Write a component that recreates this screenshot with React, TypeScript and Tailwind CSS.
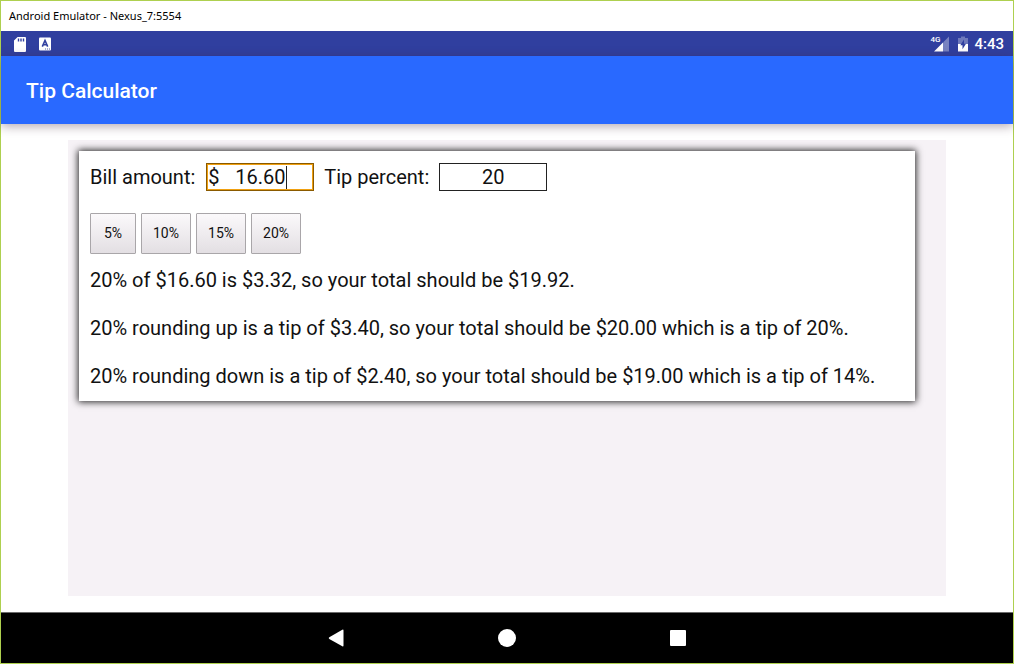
import { useState } from "react";

const TIP_PRESETS = [5, 10, 15, 20];

function StatusBar() {
  return (
    <div className="flex h-[25px] shrink-0 items-center bg-[#303f9f] pr-[9px] pl-[11px] text-white">
      <svg className="h-4 w-4" viewBox="0 0 16 16" fill="currentColor" aria-hidden="true">
        <path
          fillRule="evenodd"
          d="M5.6 1H13q1 0 1 1v13q0 1-1 1H3q-1 0-1-1V4.6zM5.8 2.5v3h1.4v-3zm2.5 0v3h1.4v-3zm2.5 0v3h1.4v-3z"
        />
      </svg>
      <svg className="ml-[10px] h-[14px] w-[14px]" viewBox="0 0 14 14" aria-hidden="true">
        <rect x="1" y="0.5" width="12" height="13" rx="1" fill="white" />
        <path d="M4.3 9.6 7 3.4l2.7 6.2M5.3 7.7h3.4" fill="none" stroke="#303f9f" strokeWidth="1.6" />
        <path d="M7 12h1m1 0h1m1 0h1" stroke="#303f9f" strokeWidth="0.8" />
      </svg>
      <div className="ml-auto flex items-center">
        <div className="relative h-4 w-5">
          <svg className="h-4 w-5" viewBox="0 0 20 16" aria-hidden="true">
            <path d="M19 0.5V15.5h-6V6.5z" fill="white" fillOpacity="0.35" />
            <path d="M13 6.5v9H4z" fill="white" />
          </svg>
          <span className="absolute -top-px left-0 text-[8px] leading-[10px] font-medium">4G</span>
        </div>
        <svg className="ml-[7px] h-4 w-3" viewBox="0 0 12 16" aria-hidden="true">
          <path d="M4 0.5h4V2h3v6H1V2h3z" fill="white" fillOpacity="0.3" />
          <path d="M1 8h10v7.5H1z" fill="white" />
          <path d="M7 3.5 3.3 9.3h2.2v3.9L9 7.7H7z" fill="#303f9f" />
        </svg>
        <span className="ml-[5px] pt-px text-[15px] leading-6 font-medium">4:43</span>
      </div>
    </div>
  );
}

function NavBar() {
  return (
    <nav className="flex h-[51px] shrink-0 items-center justify-center gap-[147px] border-t border-[#6b6b6b] bg-black text-white">
      <button type="button" aria-label="Back">
        <svg className="h-6 w-6" viewBox="0 0 24 24" fill="currentColor">
          <path d="M19.5 4.5v15q0 1.4-1.2.8l-13-7.4q-1.2-.9 0-1.7l13-7.5q1.2-.6 1.2.8z" />
        </svg>
      </button>
      <button type="button" aria-label="Home">
        <svg className="h-6 w-6" viewBox="0 0 24 24" fill="currentColor">
          <circle cx="12" cy="12" r="9" />
        </svg>
      </button>
      <button type="button" aria-label="Recent apps">
        <svg className="h-6 w-6" viewBox="0 0 24 24" fill="currentColor">
          <rect x="4" y="4" width="16" height="16" rx="1" />
        </svg>
      </button>
    </nav>
  );
}

export default function App() {
  const [bill, setBill] = useState("16.60");
  const [percent, setPercent] = useState("20");
  const [editing, setEditing] = useState(false);

  const amount = Number(bill) || 0;
  const rate = Number(percent) || 0;
  const tip = (amount * rate) / 100;
  const total = amount + tip;
  const totalUp = Math.ceil(total);
  const totalDown = Math.floor(total);
  const share = (t: number) => (amount > 0 ? Math.floor(((t - amount) / amount) * 100) : 0);

  return (
    <div className="flex min-h-screen flex-col border border-[#aed04f] bg-white font-[Roboto,sans-serif] text-[#111]">
      <div className="h-[30px] shrink-0 pl-2 font-['Noto_Sans','Open_Sans',sans-serif] text-[11px] leading-[30px] text-black">
        Android Emulator - Nexus_7:5554
      </div>
      <StatusBar />
      <header className="z-10 flex h-[68px] shrink-0 items-center bg-[#2969ff] px-[25px] pt-[2px] shadow-[0_2px_10px_rgba(60,30,50,0.4)]">
        <h1 className="text-[21px] leading-7 font-medium text-white">Tip Calculator</h1>
      </header>
      <main className="flex grow flex-col px-[67px] pt-4 pb-4">
        <div className="grow bg-[#f6f2f6] pt-[11px] pr-[31px] pl-[11px]">
          <section className="bg-white px-[11px] pt-3 pb-[11px] text-[20px] leading-7 shadow-[0_0_7px_1px_rgba(0,0,0,0.85)]">
            <div className="flex items-center">
              <label htmlFor="bill">Bill amount:</label>
              <div className="relative ml-[11px]">
                <span className="absolute top-0 left-[2px]">$</span>
                <input
                  id="bill"
                  inputMode="decimal"
                  value={bill}
                  onChange={(e) => setBill(e.target.value)}
                  onFocus={() => setEditing(true)}
                  onBlur={() => setEditing(false)}
                  className="block h-7 w-[108px] border border-[#8a5a00] text-center outline-none ring-1 ring-[#f0a010] ring-inset"
                />
                {!editing && <span className="absolute top-[3px] left-[80px] h-[23px] w-px bg-[#222]" />}
              </div>
              <label htmlFor="percent" className="ml-[10px]">
                Tip percent:
              </label>
              <input
                id="percent"
                inputMode="numeric"
                value={percent}
                onChange={(e) => setPercent(e.target.value)}
                className="ml-[10px] block h-7 w-[108px] border border-[#222] text-center outline-none"
              />
            </div>
            <div className="mt-[22px] flex gap-[5px]">
              {TIP_PRESETS.map((p) => (
                <button
                  key={p}
                  type="button"
                  onClick={() => setPercent(String(p))}
                  className="h-[41px] min-w-[46px] rounded-[1px] border border-[#a9a6a9] bg-linear-to-b from-[#fbf9fb] to-[#e3dfe3] px-[11px] pb-[2px] text-[14px] leading-5"
                >
                  {p}%
                </button>
              ))}
            </div>
            <div className="mt-3 flex flex-col gap-5">
              <p>{`${rate}% of $${amount.toFixed(2)} is $${tip.toFixed(2)}, so your total should be $${total.toFixed(2)}.`}</p>
              <p>{`${rate}% rounding up is a tip of $${(totalUp - amount).toFixed(2)}, so your total should be $${totalUp.toFixed(2)} which is a tip of ${share(totalUp)}%.`}</p>
              <p>{`${rate}% rounding down is a tip of $${(totalDown - amount).toFixed(2)}, so your total should be $${totalDown.toFixed(2)} which is a tip of ${share(totalDown)}%.`}</p>
            </div>
          </section>
        </div>
      </main>
      <NavBar />
    </div>
  );
}
